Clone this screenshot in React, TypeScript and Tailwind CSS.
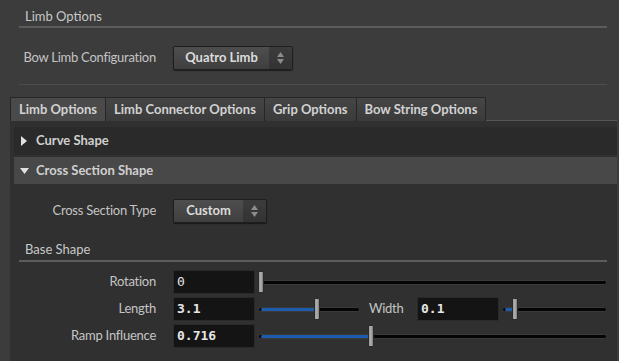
import React from "react";

const ui = { fontFamily: "Lato, 'Open Sans', sans-serif" };
const mono = { fontFamily: "'DejaVu Sans Mono', 'Liberation Mono', monospace" };

function Dropdown({ label, width }: { label: string; width: number }) {
  return (
    <div
      className="flex h-[24px] rounded-[2px] border border-[#1e1e1e] shadow-[0_1px_1px_rgba(0,0,0,0.5)] overflow-hidden"
      style={{ width }}
    >
      <div className="flex-1 flex items-center justify-center bg-gradient-to-b from-[#4e4e4e] to-[#3f3f3f] text-[13px] font-bold text-[#dcdcdc]">
        {label}
      </div>
      <div className="w-[23px] flex flex-col items-center justify-center gap-[2px] bg-gradient-to-b from-[#3c3c3c] to-[#333333]">
        <svg width="7" height="5" viewBox="0 0 7 5"><path d="M3.5 0L7 5H0Z" fill="#8c8c8c" /></svg>
        <svg width="7" height="5" viewBox="0 0 7 5"><path d="M0 0H7L3.5 5Z" fill="#8c8c8c" /></svg>
      </div>
    </div>
  );
}

function Slider({ value, blue }: { value: number; blue?: boolean }) {
  return (
    <div className="relative flex-1 h-[24px] flex items-center">
      <div className="relative w-full h-[5px] rounded-full bg-[#050505] border border-[#3a3a3a]">
        {blue && (
          <div
            className="absolute left-[2px] top-[0px] h-[3px] rounded-full bg-[#1d5cad]"
            style={{ width: `calc(${value * 100}% - 2px)` }}
          />
        )}
      </div>
      <div
        className="absolute top-[1px] w-[6px] h-[22px] rounded-[1px] border border-[#2a2a2a] bg-gradient-to-r from-[#9a9a9a] via-[#b0b0b0] to-[#7a7a7a]"
        style={{ left: `calc(${value * 100}% - ${value * 6}px)` }}
      />
    </div>
  );
}

function Field({ value, bold = true }: { value: string; bold?: boolean }) {
  return (
    <div
      className={`w-[82px] h-[24px] flex items-center pl-[3px] bg-[#141414] border border-[#2a2a2a] text-[13px] text-[#e6e6e6] ${bold ? "font-bold" : ""}`}
      style={mono}
    >
      {value}
    </div>
  );
}

function Label({ text, w = 142 }: { text: string; w?: number }) {
  return (
    <div
      className="flex justify-end whitespace-nowrap text-[13px] tracking-[-0.25px] text-[#c4c4c4] shrink-0"
      style={{ width: w }}
    >
      {text}
    </div>
  );
}

export default function App() {
  const tabs = ["Limb Options", "Limb Connector Options", "Grip Options", "Bow String Options"];
  return (
    <div className="w-[619px] h-[361px] overflow-hidden bg-[#3c3c3c] flex flex-col" style={ui}>
      {/* top parms */}
      <div className="pl-[19px] pr-[12px]">
        <div className="h-[26px] flex items-end pl-[6px] text-[13px] text-[#c8c8c8]">Limb Options</div>
        <div className="h-[2px] bg-[#5c5c5c]" />
        <div className="flex items-center h-[24px] mt-[18px]">
          <Label text="Bow Limb Configuration" w={137} />
          <div className="ml-[17px]">
            <Dropdown label="Quatro Limb" width={120} />
          </div>
        </div>
        <div className="h-[1px] bg-[#4c4c4c] mt-[14px]" />
      </div>

      {/* tabs */}
      <div className="flex pl-[10px] pr-[2px] mt-[12px]">
        {tabs.map((t, i) => (
          <div
            key={t}
            className={`h-[24px] px-[8px] flex items-center text-[13px] font-bold text-[#d2d2d2] border border-[#262626] border-b-0 ${
              i > 0 ? "border-l-0" : ""
            } ${i === 0 ? "bg-[#4a4a4a]" : "bg-gradient-to-b from-[#464646] to-[#3a3a3a]"}`}
          >
            {t}
          </div>
        ))}
        <div className="flex-1 border-b border-[#565656]" />
      </div>

      {/* panel */}
      <div className="flex-1 ml-[10px] mr-[2px] bg-[#303030] pt-[6px] pl-[4px] flex flex-col">
        <div className="h-[28px] flex items-center bg-[#2a2a2a] text-[13px] font-bold text-[#d0d0d0]">
          <svg className="ml-[7px] mr-[9px]" width="6" height="10" viewBox="0 0 6 10"><path d="M0 0L6 5L0 10Z" fill="#e0e0e0" /></svg>
          Curve Shape
        </div>
        <div className="h-[27px] mt-[2px] flex items-center bg-[#484848] text-[13px] font-bold text-[#d0d0d0]">
          <svg className="ml-[6px] mr-[7px]" width="9" height="6" viewBox="0 0 9 6"><path d="M0 0H9L4.5 6Z" fill="#e0e0e0" /></svg>
          Cross Section Shape
        </div>

        <div className="flex items-center mt-[15px]">
          <Label text="Cross Section Type" />
          <div className="ml-[17px]">
            <Dropdown label="Custom" width={94} />
          </div>
        </div>

        <div className="pl-[5px] pr-[10px] mt-[18px]">
          <div className="pl-[6px] text-[13px] text-[#c8c8c8] h-[18px] flex items-center">Base Shape</div>
          <div className="h-[2px] bg-[#5c5c5c] mt-[1px]" />
        </div>

        <div className="flex flex-col gap-[3px] mt-[8px] pr-[10px]">
          <div className="flex items-center">
            <Label text="Rotation" />
            <div className="ml-[17px]"><Field value="0" bold={false} /></div>
            <div className="ml-[3px] flex-1 flex"><Slider value={0} /></div>
          </div>
          <div className="flex items-center">
            <Label text="Length" />
            <div className="ml-[17px]"><Field value="3.1" /></div>
            <div className="ml-[3px] w-[102px] flex"><Slider value={0.58} blue /></div>
            <div className="ml-[9px] w-[48px] text-[13px] tracking-[-0.25px] text-[#c4c4c4]">Width</div>
            <Field value="0.1" />
            <div className="ml-[3px] flex-1 flex"><Slider value={0.1} blue /></div>
          </div>
          <div className="flex items-center">
            <Label text="Ramp Influence" />
            <div className="ml-[17px]"><Field value="0.716" /></div>
            <div className="ml-[3px] flex-1 flex"><Slider value={0.32} blue /></div>
          </div>
        </div>
      </div>
    </div>
  );
}
